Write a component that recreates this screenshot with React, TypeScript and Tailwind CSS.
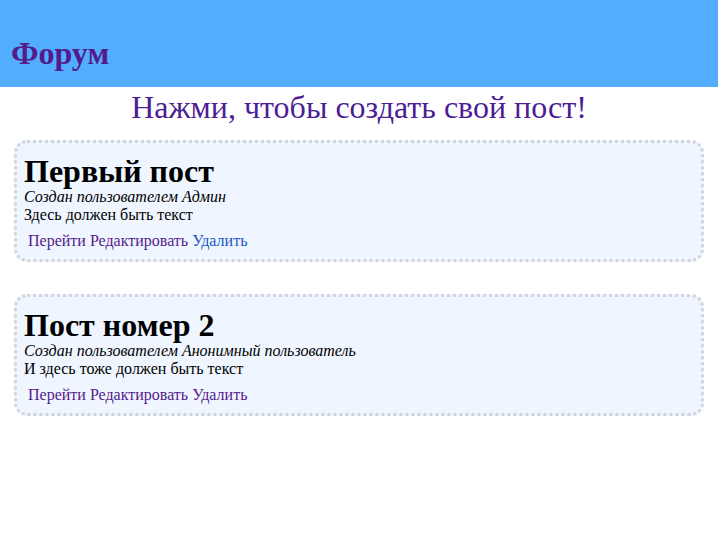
import React from 'react';

const posts = [
  {
    id: 1,
    title: 'Первый пост',
    author: 'Админ',
    text: 'Здесь должен быть текст',
    deleteVisited: false,
  },
  {
    id: 2,
    title: 'Пост номер 2',
    author: 'Анонимный пользователь',
    text: 'И здесь тоже должен быть текст',
    deleteVisited: true,
  },
];

const App: React.FC = () => {
  return (
    <div className="min-h-screen bg-white text-black" style={{ fontFamily: '"Liberation Serif", "Times New Roman", serif' }}>
      <header className="h-[87px] bg-[#52adff] px-[11px] pt-[35px]">
        <h1 className="text-[32px] font-bold text-[#551a8b] leading-[37px]">Форум</h1>
      </header>

      <h2 className="text-center text-[32px] text-[#4c1d95] leading-[37px] mt-[2px]">
        Нажми, чтобы создать свой пост!
      </h2>

      <div className="flex flex-col gap-[32px] px-[14px] mt-[14px]">
        {posts.map((post) => (
          <div
            key={post.id}
            className="bg-[#eff6ff] border-[3px] border-dotted border-[#d1d5db] rounded-[13px] px-[7px] pt-[11px] pb-[9px]"
          >
            <h3 className="text-[32px] font-bold leading-[34px]">{post.title}</h3>
            <p className="italic text-[16px] leading-[18px]">Создан пользователем {post.author}</p>
            <p className="text-[16px] leading-[18px]">{post.text}</p>
            <div className="text-[16px] leading-[18px] mt-[8px] pl-[4px]">
              <a className="text-[#551a8b]">Перейти</a>{' '}
              <a className="text-[#551a8b]">Редактировать</a>{' '}
              <a className={post.deleteVisited ? 'text-[#551a8b]' : 'text-[#1a56c8]'}>Удалить</a>
            </div>
          </div>
        ))}
      </div>
    </div>
  );
};

export default App;
